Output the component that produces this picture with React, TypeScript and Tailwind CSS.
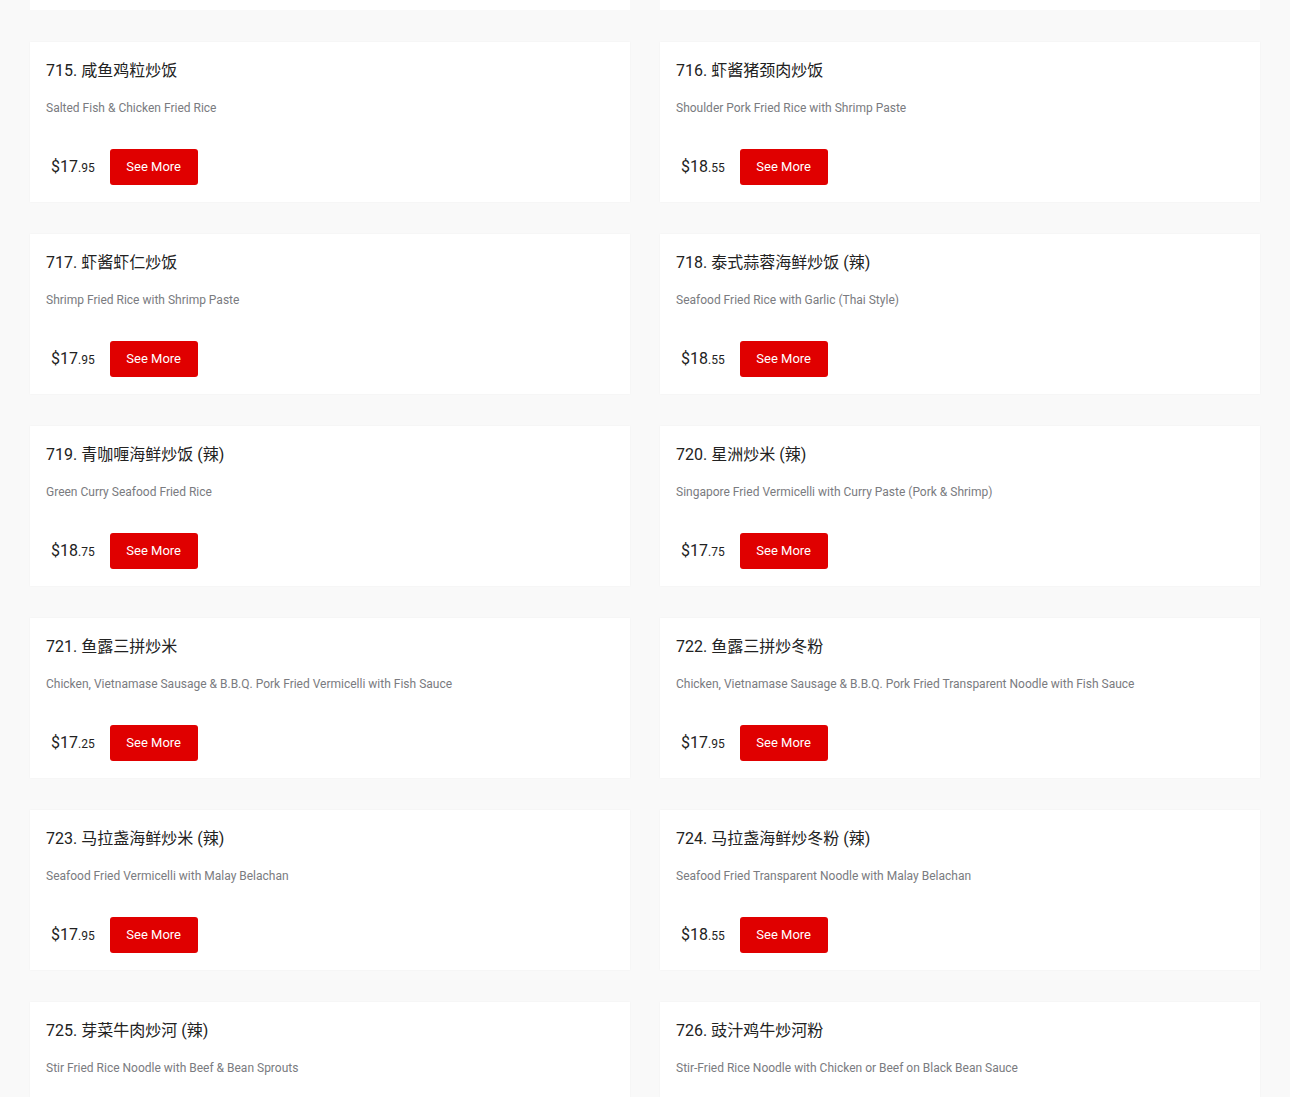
type Dish = {
  no: number;
  name: string;
  spicy?: boolean;
  desc: string;
  dollars: string;
  cents: string;
};

const dishes: Dish[] = [
  { no: 715, name: "咸鱼鸡粒炒饭", desc: "Salted Fish & Chicken Fried Rice", dollars: "17", cents: "95" },
  { no: 716, name: "虾酱猪颈肉炒饭", desc: "Shoulder Pork Fried Rice with Shrimp Paste", dollars: "18", cents: "55" },
  { no: 717, name: "虾酱虾仁炒饭", desc: "Shrimp Fried Rice with Shrimp Paste", dollars: "17", cents: "95" },
  { no: 718, name: "泰式蒜蓉海鲜炒饭", spicy: true, desc: "Seafood Fried Rice with Garlic (Thai Style)", dollars: "18", cents: "55" },
  { no: 719, name: "青咖喱海鲜炒饭", spicy: true, desc: "Green Curry Seafood Fried Rice", dollars: "18", cents: "75" },
  { no: 720, name: "星洲炒米", spicy: true, desc: "Singapore Fried Vermicelli with Curry Paste (Pork & Shrimp)", dollars: "17", cents: "75" },
  { no: 721, name: "鱼露三拼炒米", desc: "Chicken, Vietnamase Sausage & B.B.Q. Pork Fried Vermicelli with Fish Sauce", dollars: "17", cents: "25" },
  { no: 722, name: "鱼露三拼炒冬粉", desc: "Chicken, Vietnamase Sausage & B.B.Q. Pork Fried Transparent Noodle with Fish Sauce", dollars: "17", cents: "95" },
  { no: 723, name: "马拉盏海鲜炒米", spicy: true, desc: "Seafood Fried Vermicelli with Malay Belachan", dollars: "17", cents: "95" },
  { no: 724, name: "马拉盏海鲜炒冬粉", spicy: true, desc: "Seafood Fried Transparent Noodle with Malay Belachan", dollars: "18", cents: "55" },
  { no: 725, name: "芽菜牛肉炒河", spicy: true, desc: "Stir Fried Rice Noodle with Beef & Bean Sprouts", dollars: "17", cents: "95" },
  { no: 726, name: "豉汁鸡牛炒河粉", desc: "Stir-Fried Rice Noodle with Chicken or Beef on Black Bean Sauce", dollars: "17", cents: "95" },
];

function DishCard({ dish }: { dish: Dish }) {
  return (
    <div className="flex flex-col bg-white px-4 pt-[17px] pb-[17px] shadow-[0_0_2px_rgba(0,0,0,0.04)]">
      <h3 className="text-[16px] leading-6 text-[#222222] font-normal">
        {dish.no}. {dish.name}
        {dish.spicy && " (辣)"}
      </h3>
      <p className="mt-4 text-[12px] leading-[18px] text-[#7a7b80]">{dish.desc}</p>
      <div className="mt-[32px] flex h-9 items-center gap-[15px] pl-[5px]">
        <span className="text-[#222222]">
          <span className="text-[16px]">${dish.dollars}</span>
          <span className="text-[12px]">.{dish.cents}</span>
        </span>
        <button
          type="button"
          className="h-9 w-[88px] rounded-[3px] bg-[#e00000] text-[13px] text-white"
        >
          See More
        </button>
      </div>
    </div>
  );
}

export default function App() {
  return (
    <div
      className="h-screen overflow-hidden bg-[#f9f9f9] px-[30px]"
      style={{ fontFamily: 'Roboto, "Noto Sans CJK SC", sans-serif' }}
    >
      {/* tail of the previous row */}
      <div className="grid grid-cols-2 gap-x-[30px]">
        <div className="h-[10px] bg-white" />
        <div className="h-[10px] bg-white" />
      </div>
      <div className="mt-8 grid grid-cols-2 gap-x-[30px] gap-y-8">
        {dishes.map((d) => (
          <DishCard key={d.no} dish={d} />
        ))}
      </div>
    </div>
  );
}
